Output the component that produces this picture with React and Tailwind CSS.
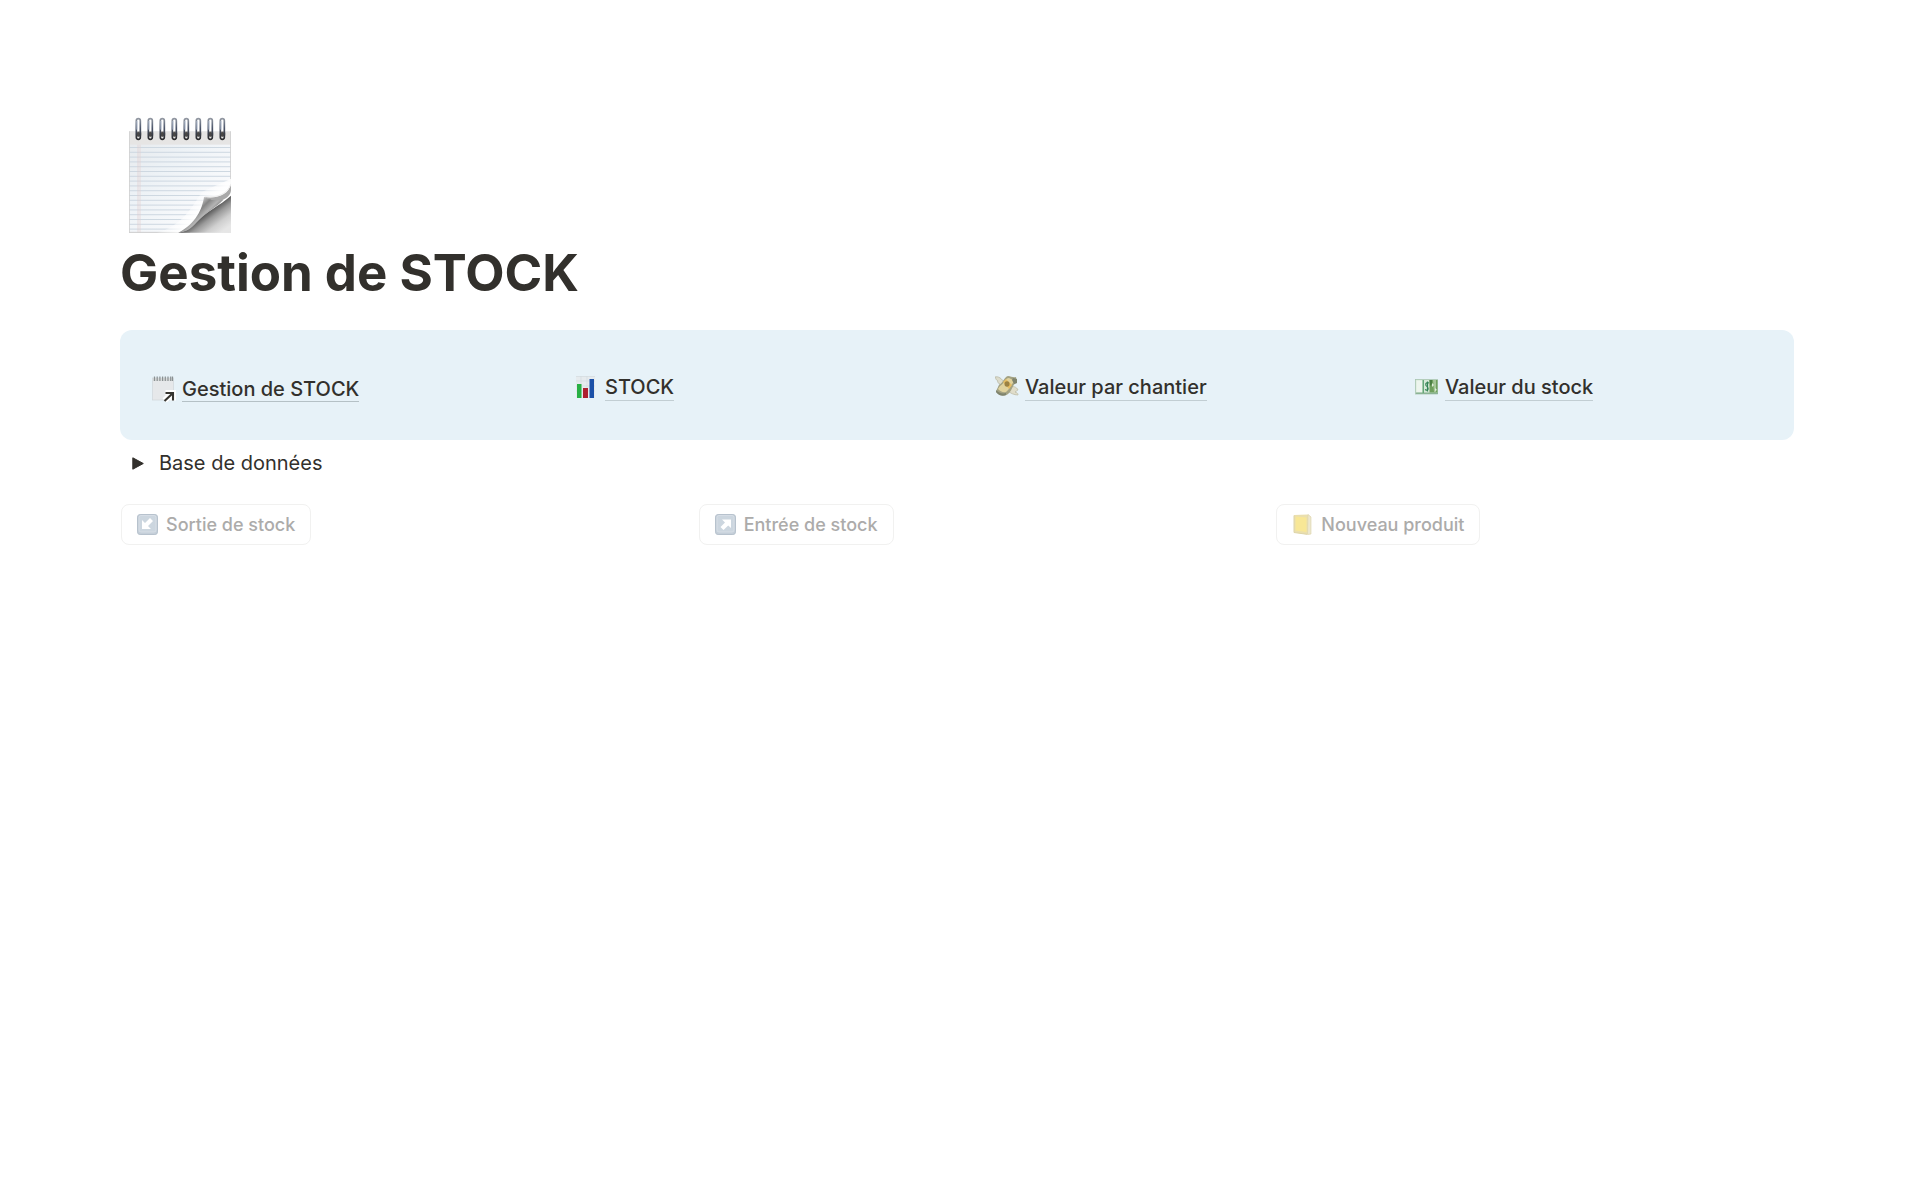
import React from "react";

const ringXs = [84, 120, 156, 192, 228, 264, 300, 336];
const ruleYs = Array.from({ length: 18 }, (_, i) => 140 + i * 14.4);

function NotepadIcon() {
  return (
    <svg className="block h-[116px] w-[102px]" viewBox="57 50 306 348" aria-hidden="true">
      <defs>
        <linearGradient id="paper" x1="0" y1="0" x2="1" y2="1">
          <stop offset="0" stopColor="#e6e9ec" />
          <stop offset="0.35" stopColor="#edf2f6" />
          <stop offset="0.75" stopColor="#f9fafc" />
          <stop offset="1" stopColor="#dcdcdc" />
        </linearGradient>
        <linearGradient id="curl" gradientUnits="userSpaceOnUse" x1="262" y1="305" x2="305" y2="350">
          <stop offset="0" stopColor="#d0d0d0" />
          <stop offset="0.35" stopColor="#858585" />
          <stop offset="0.65" stopColor="#b4b4b4" />
          <stop offset="1" stopColor="#6a6a6a" />
        </linearGradient>
        <linearGradient id="under" gradientUnits="userSpaceOnUse" x1="290" y1="335" x2="335" y2="395">
          <stop offset="0" stopColor="#4f4f4f" />
          <stop offset="0.3" stopColor="#9a9a9a" />
          <stop offset="0.65" stopColor="#cfcfcf" />
          <stop offset="1" stopColor="#e6e6e6" />
        </linearGradient>
        <linearGradient id="shade" gradientUnits="userSpaceOnUse" x1="215" y1="310" x2="270" y2="365">
          <stop offset="0" stopColor="#ffffff" stopOpacity="0" />
          <stop offset="0.7" stopColor="#ffffff" stopOpacity="0.9" />
          <stop offset="1" stopColor="#ffffff" />
        </linearGradient>
        <linearGradient id="ring" x1="0" y1="0" x2="0" y2="1">
          <stop offset="0" stopColor="#9197a1" />
          <stop offset="0.45" stopColor="#4c566b" />
          <stop offset="1" stopColor="#2b2b2d" />
        </linearGradient>
      </defs>
      <rect x="57" y="93" width="306" height="304" fill="url(#paper)" />
      <rect x="57" y="93" width="306" height="40" fill="#e6e5e4" />
      {ruleYs.map((y) => (
        <rect key={y} x="57" y={y} width="306" height="3" fill="#ced8e1" />
      ))}
      <rect x="83" y="133" width="2" height="264" fill="#e2cccc" />
      <rect x="89" y="133" width="2" height="264" fill="#e4d0d0" />
      <path d="M58 93V397M362 93V255" stroke="#d0d0d0" strokeWidth="3" />
      <path d="M57 396H240" stroke="#cccccc" strokeWidth="3" />
      <path d="M140 397C210 380 245 325 275 275L363 235V320L205 397Z" fill="url(#shade)" />
      <path d="M363 286C330 316 285 335 258 366C245 382 228 394 205 397H363Z" fill="url(#under)" />
      <path d="M282 290C277 325 258 370 205 397C240 393 252 374 268 358C290 336 322 318 340 298C322 300 300 297 282 290Z" fill="url(#curl)" />
      <path d="M363 252C355 282 325 296 282 290C300 300 320 302 338 299C352 293 362 284 363 270Z" fill="#a9a9a9" />
      <path d="M363 250C354 279 325 293 284 289" fill="none" stroke="#ededed" strokeWidth="3" />
      {ringXs.map((x) => (
        <g key={x}>
          <ellipse cx={x + 2} cy="101" rx="9" ry="9" fill="#b3b1af" />
          <circle cx={x + 1} cy="102" r="7" fill="#4a4846" />
          <rect x={x - 5} y="55" width="12" height="62" rx="6" fill="none" stroke="url(#ring)" strokeWidth="5" />
          <path d={`M${x - 3} 62V88`} stroke="#b9c4d6" strokeWidth="3" />
        </g>
      ))}
    </svg>
  );
}

function LinkedPageIcon() {
  return (
    <svg className="h-[26px] w-6 shrink-0" viewBox="0 0 24 26" aria-hidden="true">
      <rect x="0.5" y="2" width="21" height="22" fill="#e6e8ea" stroke="#d0d6da" strokeWidth="0.7" />
      <rect x="1" y="2" width="20" height="3" fill="#d9dbdb" />
      <path d="M2.5 0.5V5M5.2 0.5V5M7.9 0.5V5M10.6 0.5V5M13.3 0.5V5M16 0.5V5M18.7 0.5V5M20.5 0.5V5" stroke="#8a9193" strokeWidth="1.2" />
      <path d="M12.5 24.5L21 17M13.5 17H21V24.5" fill="none" stroke="#ffffff" strokeWidth="6" />
      <path d="M12.5 25L21 17M13.5 17H21V24.5" fill="none" stroke="#373530" strokeWidth="2.1" />
    </svg>
  );
}

function ChartIcon() {
  return (
    <svg className="size-6 shrink-0" viewBox="0 0 24 24" aria-hidden="true">
      <rect x="1" y="1" width="19" height="22" fill="#e6ebee" />
      <path d="M1 1.5H20M1 6H20M1 11H20M1 16H20M6 1V23M12 1V23" stroke="#d3dbe0" strokeWidth="0.7" />
      <rect x="2" y="9" width="4.5" height="14" fill="#27b045" />
      <rect x="8" y="13" width="5" height="10" fill="#ad2030" />
      <rect x="14.5" y="4" width="4.5" height="19" fill="#1c51a8" />
    </svg>
  );
}

function FlyingMoneyIcon() {
  return (
    <svg className="size-6 shrink-0" viewBox="0 0 24 24" aria-hidden="true">
      <path d="M10 9C7 3 3 1 0 2C1 4 1 5 3 6C2 7 3 8 4 8C4 10 7 11 9 12Z" fill="#dcdccc" stroke="#b3b39f" strokeWidth="0.7" />
      <path d="M14 13C17 10 22 12 23 15C21 15 22 17 20 17C23 18 23 19 23 20C19 20 15 18 13 16Z" fill="#e0ddca" stroke="#bab9a3" strokeWidth="0.7" />
      <path d="M4 10C9 7 9 2 13 1C16 1 18 3 21 2L22 8C17 9 18 15 13 19C9 22 4 20 1 17L2 14C3 13 3 11 4 10Z" fill="#a3a283" />
      <path d="M5 11C10 8 10 3 14 3L20 6C16 9 15 14 11 17C8 18 5 16 3 14Z" fill="#e0d29d" />
      <path d="M1 15C4 18 7 19 11 18V20C7 22 3 20 1 17ZM18 3L22 4V8L19 9L17 5Z" fill="#7f846e" />
      <path d="M8 7L11 4L17 10L14 14Z" fill="#e5bd63" />
      <ellipse cx="12" cy="9" rx="2.5" ry="2.8" fill="#9b8142" />
    </svg>
  );
}

function BanknoteIcon() {
  return (
    <svg className="size-6 shrink-0" viewBox="0 0 24 24" aria-hidden="true">
      <rect x="0.5" y="4.5" width="22" height="14.5" fill="#d7e9d9" stroke="#a9c5b0" strokeWidth="0.8" />
      <rect x="1" y="17.5" width="22" height="1.5" fill="#8bb395" />
      <rect x="1.5" y="5.5" width="6" height="11.5" fill="#edf5ee" />
      <rect x="7.5" y="5" width="1.5" height="13" fill="#65a779" />
      <rect x="14.5" y="5" width="8" height="12.5" fill="#6f9f5d" />
      <path d="M18 5H21V17H19Z" fill="#a5c698" />
      <path d="M14.5 5H17V9L15 11Z" fill="#4a7f42" />
      <path d="M14 8C12 7 10 8 11 10.5C12 12 14 12 13 14.5C12 16 11 15 10 14.5M12.5 6.5V16.5" fill="none" stroke="#348456" strokeWidth="1.2" />
      <path d="M17 8L19 10L17 12ZM20 13L22 15L20 16Z" fill="#e2efdd" />
    </svg>
  );
}

function ArrowTile({ incoming }) {
  return (
    <svg className="size-[21px] shrink-0" viewBox="0 0 21 21" aria-hidden="true">
      <rect x="0.5" y="0.5" width="20" height="20" rx="2.6" fill="#c5cfd9" stroke="#b7c2cd" />
      <rect x="2" y="1.5" width="17" height="16.5" rx="2" fill="#ccd6df" stroke="#dce3ea" strokeWidth="0.7" />
      {incoming ? (
        <path d="M5 6L8 9L13 4L16 7L11 12L14 15H5Z" fill="#ffffff" />
      ) : (
        <path d="M7 5.5H16V14L13.2 11.5L8.5 16L5.5 13L10 8.5Z" fill="#ffffff" />
      )}
    </svg>
  );
}

function LedgerIcon() {
  return (
    <svg className="size-[21px] shrink-0" viewBox="0 0 21 21" aria-hidden="true">
      <path d="M2 1L16 0.5L19 3V20L15 20.5L2 18.5Z" fill="#eadfae" />
      <path d="M16 0.5L19 3V20L15.5 20.5Z" fill="#ece7cf" stroke="#ddd3a8" strokeWidth="0.6" />
      <path d="M3.5 2.5L14.5 3.5V18L3.5 16.5Z" fill="#f8e796" />
      <path d="M2 1.5V18.5L15 20.3" fill="none" stroke="#ddd4a8" />
    </svg>
  );
}

function PageLink({ icon, children }) {
  return (
    <a href="#" className="flex items-center gap-[6px] pt-1 pl-[3px] text-[20px] leading-[26px] font-medium">
      {icon}
      <span className="border-b border-[#c2ced3]">{children}</span>
    </a>
  );
}

function ActionButton({ icon, children }) {
  return (
    <button
      type="button"
      disabled
      className="flex h-[41px] items-center gap-2 rounded-lg border border-[#f1f1f0] px-[15px] text-[18px] leading-6 font-medium text-[#acabaa]"
    >
      {icon}
      <span>{children}</span>
    </button>
  );
}

export default function App() {
  return (
    <main className="min-h-screen bg-white pt-[117px] pr-[126px] pb-20 pl-[120px] font-['Inter',sans-serif] text-[#32302c]">
      <div className="pl-[9px]">
        <NotepadIcon />
      </div>
      <h1 className="mt-[9px] text-[51px] leading-[62px] font-bold">Gestion de STOCK</h1>

      <nav className="mt-[26px] grid h-[110px] grid-cols-4 items-center gap-x-[60px] rounded-xl bg-[#e7f2f8] pr-[22px] pl-8">
        <a href="#" className="flex items-center gap-[6px] pt-2 text-[20px] leading-6 font-medium">
          <LinkedPageIcon />
          <span className="border-b border-[#b5c1c6]">Gestion de STOCK</span>
        </a>
        <PageLink icon={<ChartIcon />}>STOCK</PageLink>
        <PageLink icon={<FlyingMoneyIcon />}>Valeur par chantier</PageLink>
        <PageLink icon={<BanknoteIcon />}>Valeur du stock</PageLink>
      </nav>

      <button type="button" aria-expanded="false" className="mt-2 flex h-[30px] items-center gap-[15px] pl-3 text-[20px] leading-[30px]">
        <svg className="h-[13px] w-3" viewBox="0 0 12 13" aria-hidden="true">
          <path d="M0.8 0.8L11.3 6.5L0.8 12.2Z" fill="#32302c" stroke="#32302c" strokeLinejoin="round" />
        </svg>
        <span>Base de données</span>
      </button>

      <section className="mt-[26px] grid grid-cols-3 justify-items-start gap-x-[60px] pl-px">
        <ActionButton icon={<ArrowTile incoming />}>Sortie de stock</ActionButton>
        <ActionButton icon={<ArrowTile />}>Entrée de stock</ActionButton>
        <ActionButton icon={<LedgerIcon />}>Nouveau produit</ActionButton>
      </section>
    </main>
  );
}
